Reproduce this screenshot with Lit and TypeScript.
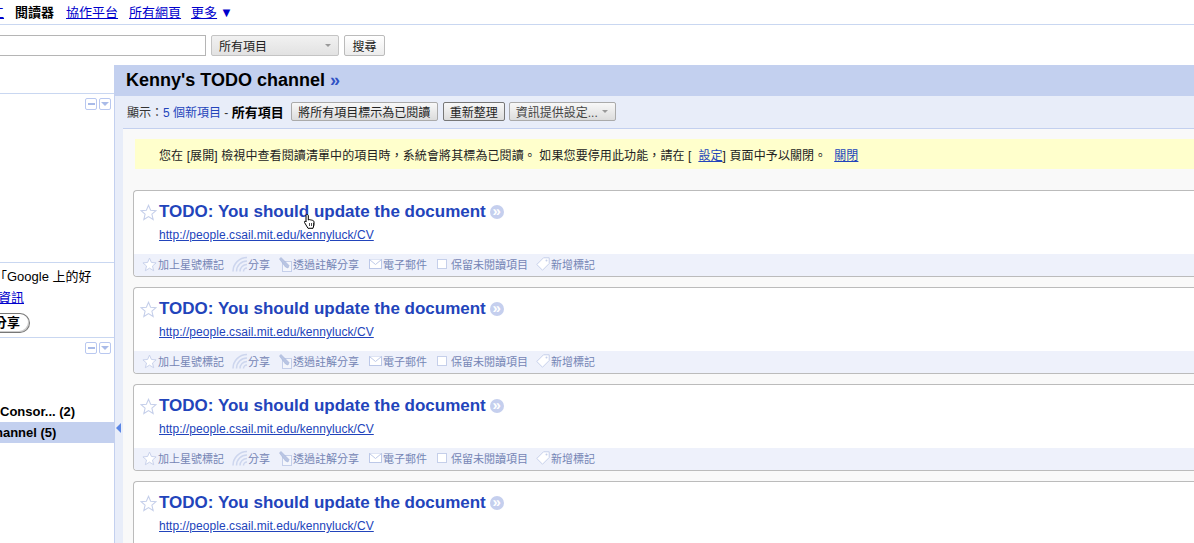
import { LitElement, html, css } from "lit";
import { customElement } from "lit/decorators.js";

const star = (s: number, c: string) => html`<svg class="ico" width=${s} height=${s} viewBox="0 0 16 16"><path d="M8 1.2l2 4.6 5 .5-3.8 3.3 1.2 5L8 11.9l-4.4 2.7 1.2-5L1 6.3l5-.5z" fill="#fff" stroke=${c} stroke-width="1"/></svg>`;

const shareIcon = html`<svg class="ico" width="15" height="16" viewBox="0 0 15 16" fill="none" stroke="#cdd6ee" stroke-width="1.5"><path d="M1 15.5A14 14 0 0 1 15 1.5"/><path d="M4.5 15.5A10.5 10.5 0 0 1 15 5"/><path d="M8 15.5A7 7 0 0 1 15 8.5"/><path d="M11.5 15.5A3.5 3.5 0 0 1 15 12"/></svg>`;
const noteIcon = html`<svg class="ico" width="13" height="15" viewBox="0 0 13 15" fill="none"><rect x="3.5" y="4.5" width="9" height="10" fill="#f4f6fc" stroke="#c5cfea"/><path d="M.5 2l1.5-1.5 8 8-1 2.5-2.5-1z" fill="#b9c5e3" stroke="#a5b3d8" stroke-width=".6"/></svg>`;
const mailIcon = html`<svg class="ico" width="13" height="10" viewBox="0 0 13 10" fill="#fff" stroke="#bcc8e8"><rect x=".5" y=".5" width="12" height="9"/><path d="M.5 .5l6 5 6-5"/></svg>`;
const boxIcon = html`<svg class="ico box" width="10" height="10" viewBox="0 0 10 10"><rect x=".5" y=".5" width="9" height="9" fill="#fff" stroke="#c5cfea"/></svg>`;
const tagIcon = html`<svg class="ico" width="14" height="14" viewBox="0 0 14 14"><path d="M.8 7.5L7.5 .8h5.7v5.7l-6.7 6.7z" fill="#fff" stroke="#c5cfea"/><circle cx="10.5" cy="3.5" r="1" fill="#c5cfea"/></svg>`;
const boxMinus = html`<span class="mini"><i class="dash"></i></span>`;
const boxDown = html`<span class="mini"><i class="tri"></i></span>`;

@customElement("app-root")
export class AppRoot extends LitElement {
  static styles = css`
    :host { display: block; width: 1194px; height: 543px; overflow: hidden; position: relative; background: #fff;
      font-family: "Liberation Sans", "Noto Sans CJK TC", sans-serif; font-size: 12px; color: #000; }
    a { color: #0000cc; text-decoration: underline; }
    .top { height: 23px; border-bottom: 1px solid #c9d7f1; display: flex; align-items: center; gap: 11px; font-size: 13px; padding-bottom: 1px; overflow: hidden; }
    .top a.cut { margin-left: -9px; }
    .top b { margin-right: 1px; }
    .top .more { color: #00c; text-decoration: none; margin-left: -1px; }
    .top .more u { margin-right: 3px; }
    .search { height: 40px; display: flex; align-items: center; gap: 5px; }
    .search input { width: 207px; height: 21px; box-sizing: border-box; border: 1px solid #b5b5b5; margin: 0 0 0 -1px; padding: 0; background: #fff; }
    .select { width: 128px; height: 21px; box-sizing: border-box; border: 1px solid #c4c4c4; border-radius: 2px; background: linear-gradient(#f1f1f1, #e2e2e2); display: flex; align-items: center; justify-content: space-between; padding: 0 7px; color: #222; }
    .select i, .btn i { width: 0; height: 0; border: 3px solid transparent; border-top: 3px solid #999; border-bottom: 0; display: block; }
    .sbtn { width: 41px; height: 21px; box-sizing: border-box; border: 1px solid #bbb; border-radius: 2px; background: linear-gradient(#fff, #ececec); display: flex; align-items: center; justify-content: center; color: #222; }
    .body { display: flex; height: 478px; }
    .side { width: 114px; flex: none; border-right: 1px solid #c3d0ef; overflow: hidden; background: #fff; }
    .sec { border-bottom: 1px solid #c9d7f1; display: flex; flex-direction: column; }
    .s1 { height: 28px; }
    .s2 { height: 168px; }
    .s3 { height: 74px; }
    .minis { display: flex; justify-content: flex-end; gap: 2px; padding: 4px 3px 0 0; }
    .mini { width: 12px; height: 12px; box-sizing: border-box; border: 1px solid #b9c8f0; border-radius: 2px; background: #fff; display: flex; align-items: center; justify-content: center; }
    .dash { width: 7px; height: 2px; background: #a9bbe8; display: block; }
    .tri { width: 0; height: 0; border: 4px solid transparent; border-top: 4px solid #a9bbe8; border-bottom: 0; display: block; }
    .promo { margin-top: auto; font-size: 13px; padding-bottom: 4px; white-space: nowrap; }
    .promo div { height: 21px; line-height: 21px; }
    .promo .l1 { margin-left: -6px; }
    .promo a { display: inline-block; margin-left: -2px; }
    .share { display: block; width: 30px; height: 20px; box-sizing: border-box; border: 1px solid #777; border-left: 0; border-radius: 0 10px 10px 0; box-shadow: inset -1px -1px 0 #ccc; line-height: 17px; font-weight: bold; text-indent: -6px; overflow: hidden; margin-top: 5px; }
    .feeds { padding-top: 47px; font-size: 13px; }
    .feed { height: 21px; line-height: 21px; font-weight: bold; white-space: nowrap; overflow: hidden; }
    .feed.sel { background: #c3d0ef; text-indent: -5px; }
    .main { flex: 1; min-width: 0; background: #e8edf9; position: relative; display: flex; flex-direction: column; }
    .collapse { position: absolute; left: 1px; top: 358px; width: 0; height: 0; border: 5px solid transparent; border-right: 5px solid #5b86e5; border-left: 0; }
    .head { height: 31px; background: #c3d0ef; padding-left: 11px; display: flex; align-items: center; font-size: 18px; font-weight: bold; flex: none; }
    .head span { color: #2f52c4; margin-left: 5px; }
    .bar { height: 32px; flex: none; padding: 0 0 1px 12px; display: flex; align-items: center; gap: 5px; font-size: 12px; color: #333; white-space: nowrap; box-sizing: border-box; }
    .bar em { font-style: normal; color: #2244bb; }
    .bar b { color: #000; font-size: 13px; margin-right: 2px; }
    .btn { height: 19px; box-sizing: border-box; border: 1px solid #aaa; border-radius: 2px; background: linear-gradient(#f8f8f8, #dcdcdc); padding: 0 6px; display: flex; align-items: center; gap: 4px; color: #222; }
    .btn.wide { padding: 0 6.5px; }
    .btn.dark { border-color: #777; margin-right: -1px; }
    .btn.grey { color: #444; padding-right: 7px; }
    .content { flex: 1; margin-left: 8px; background: #f9f9f9; border-top: 1px solid #c3d0ef; padding: 10px 0 0 10px; min-height: 0; overflow: hidden; }
    .note { height: 30px; background: #ffffcc; display: flex; align-items: center; padding-left: 24px; margin-left: 2px; white-space: pre; color: #222; letter-spacing: .105px; }
    .note a { color: #2244bb; }
    .note a.close { margin-left: 1px; }
    .cards { margin-top: 21px; display: flex; flex-direction: column; gap: 10px; }
    .card { height: 87px; flex: none; box-sizing: border-box; border: 1px solid #bbb; border-right: 0; border-radius: 4px 0 0 4px; background: #fff; display: flex; flex-direction: column; overflow: hidden; }
    .t { display: flex; align-items: center; height: 20px; margin-top: 11px; padding-left: 6px; flex: none; }
    .t h2 { margin: 0 0 0 2px; font-size: 17px; font-weight: bold; color: #2244bb; white-space: nowrap; line-height: 20px; }
    .go { width: 14px; height: 14px; border-radius: 50%; background: #c5cfee; color: #fff; font-size: 15px; line-height: 12px; text-align: center; margin-left: 4px; font-weight: bold; }
    .url { padding-left: 25px; height: 15px; line-height: 15px; margin-top: 6px; flex: none; letter-spacing: .05px; }
    .url a { color: #2244bb; font-size: 12px; }
    .acts { margin-top: auto; height: 22px; box-sizing: border-box; padding: 0 0 2px 8px; background: #eef1fb; display: flex; align-items: center; font-size: 11px; color: #7585b5; white-space: nowrap; }
    .acts > span { display: flex; align-items: center; gap: 1px; margin-right: 8px; }
    .acts > span:nth-child(2) { margin-right: 9px; }
    .acts > span:nth-child(3) { margin-right: 10px; }
    .box { margin: 0 3px 0 2px; }
    .ico { display: block; flex: none; }
    .hand { position: absolute; left: 303px; top: 213px; }
  `;

  private card() {
    return html`<div class="card">
      <div class="t">${star(17, "#c5cfea")}<h2>TODO: You should update the document</h2><span class="go">»</span></div>
      <div class="url"><a href="#">http://people.csail.mit.edu/kennyluck/CV</a></div>
      <div class="acts">
        <span>${star(15, "#c5cfea")}加上星號標記</span>
        <span>${shareIcon}分享</span>
        <span>${noteIcon}透過註解分享</span>
        <span>${mailIcon}電子郵件</span>
        <span>${boxIcon}保留未閱讀項目</span>
        <span>${tagIcon}新增標記</span>
      </div>
    </div>`;
  }

  render() {
    return html`
      <div class="top">
        <a class="cut" href="#">工</a><b>閱讀器</b><a href="#">協作平台</a><a href="#">所有網頁</a>
        <span class="more"><u>更多</u>▼</span>
      </div>
      <div class="search">
        <input type="text" />
        <div class="select">所有項目<i></i></div>
        <div class="sbtn">搜尋</div>
      </div>
      <div class="body">
        <div class="side">
          <div class="sec s1"></div>
          <div class="sec s2">
            <div class="minis">${boxMinus}${boxDown}</div>
          </div>
          <div class="sec s3">
            <div class="promo">
              <div class="l1">「Google 上的好</div>
              <div><a href="#">資訊</a></div>
              <span class="share">分享</span>
            </div>
          </div>
          <div class="minis">${boxMinus}${boxDown}</div>
          <div class="feeds">
            <div class="feed">Consor... (2)</div>
            <div class="feed sel">hannel (5)</div>
          </div>
        </div>
        <div class="main">
          <div class="collapse"></div>
          <div class="head">Kenny's TODO channel<span>»</span></div>
          <div class="bar">
            <span>顯示：<em>5 個新項目</em> - <b>所有項目</b></span>
            <div class="btn wide">將所有項目標示為已閱讀</div>
            <div class="btn dark">重新整理</div>
            <div class="btn grey">資訊提供設定...<i></i></div>
          </div>
          <div class="content">
            <div class="note">您在 [展開] 檢視中查看閱讀清單中的項目時，系統會將其標為已閱讀。 如果您要停用此功能，請在 [  <a href="#">設定</a>] 頁面中予以關閉。  <a class="close" href="#">關閉</a></div>
            <div class="cards">${this.card()}${this.card()}${this.card()}${this.card()}</div>
          </div>
        </div>
      </div>
      <svg class="hand" width="14" height="17" viewBox="0 0 14 17"><path d="M4 1.5c1 0 1.3.6 1.3 1.5v4l1-.4 1 .2 1 .2 1.2.3 1 .5.5 1v3l-1 3.5H5L1.5 9.5c-.5-1 .5-1.8 1.3-1L3 9V3c0-1 .2-1.5 1-1.5z" fill="#fff" stroke="#000" stroke-width="1"/><path d="M6.5 10v3M8.5 10v3M10.5 10v3" stroke="#000" stroke-width=".7"/></svg>
    `;
  }
}
